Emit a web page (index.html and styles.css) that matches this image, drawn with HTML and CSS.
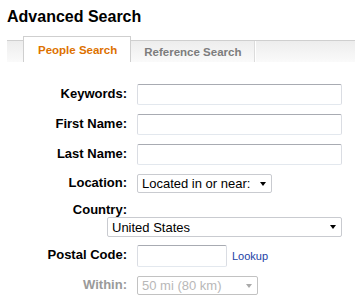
FILE: index.html
```html
<!DOCTYPE html>
<html>
<head>
<meta charset="utf-8">
<link rel="stylesheet" href="styles.css">
</head>
<body>
<div class="page">
  <h1 class="title">Advanced Search</h1>
  <div class="tabs">
    <div class="tab tab-active">People Search</div>
    <div class="tab tab-other">Reference Search</div>
  </div>
  <form class="form">
    <div class="row">
      <label class="label">Keywords:</label>
      <input class="text wide" type="text">
    </div>
    <div class="row">
      <label class="label">First Name:</label>
      <input class="text wide" type="text">
    </div>
    <div class="row">
      <label class="label">Last Name:</label>
      <input class="text wide" type="text">
    </div>
    <div class="row">
      <label class="label">Location:</label>
      <span class="sel sel-loc"><select><option>Located in or near:</option></select></span>
    </div>
    <div class="row row-country-label">
      <label class="label">Country:</label>
    </div>
    <div class="row row-country">
      <span class="sel sel-country"><select><option>United States</option></select></span>
    </div>
    <div class="row">
      <label class="label">Postal Code:</label>
      <input class="text postal" type="text">
      <a class="lookup" href="#">Lookup</a>
    </div>
    <div class="row">
      <label class="label label-dis">Within:</label>
      <span class="sel sel-within sel-dis"><select disabled><option>50 mi (80 km)</option></select></span>
    </div>
  </form>
</div>
</body>
</html>
```

FILE: styles.css
```css
html, body {
  margin: 0;
  padding: 0;
  background: #fff;
}
.page {
  padding-left: 7px;
  font-family: "Liberation Sans", Arial, sans-serif;
  color: #000;
}
.title {
  margin: 7px 0 0 0;
  font-size: 16px;
  line-height: 19px;
  font-weight: bold;
}
.tabs {
  margin-top: 14px;
  height: 21px;
  border-top: 1px solid #cfcfcf;
  background: linear-gradient(#ededed, #fafafa);
  display: flex;
  padding-left: 16px;
}
.tab {
  font-size: 11.5px;
  font-weight: bold;
  display: flex;
  align-items: center;
}
.tab-active {
  margin-top: -5px;
  height: 25px;
  padding: 0 13px 0 14px;
  background: #fff;
  border: 1px solid #cfcfcf;
  border-bottom: none;
  color: #dd7200;
  padding-top: 1px;
  box-sizing: border-box;
  height: 26px;
}
.tab-other {
  color: #7d7d7d;
  padding: 0 13px 0 13px;
  border-right: 1px solid #dcdcdc;
  box-shadow: 1px 0 0 #fff;
}
.form {
  margin-top: 22px;
}
.row {
  display: flex;
  align-items: center;
  margin-bottom: 9px;
}
.label {
  width: 120px;
  margin-right: 10px;
  text-align: right;
  font-size: 13px;
  line-height: 15px;
  font-weight: bold;
  padding-bottom: 3px;
}
.label-dis {
  color: #9a9a9a;
}
.text {
  box-sizing: border-box;
  height: 21px;
  margin: 0;
  border: 1px solid #dadde3;
  border-top-color: #a8abb2;
  border-bottom-color: #e3e8ee;
  border-radius: 2px;
  background: #fff;
  font-family: "Liberation Sans", Arial, sans-serif;
  font-size: 13px;
}
.wide {
  width: 205px;
}
.postal {
  width: 90px;
  height: 22px;
}
.lookup {
  margin-left: 5px;
  font-size: 11px;
  color: #2142a6;
  text-decoration: none;
}
.sel {
  position: relative;
  display: inline-block;
}
.sel select {
  -webkit-appearance: none;
  appearance: none;
  box-sizing: border-box;
  margin: 0;
  padding: 0 0 0 4px;
  border: 1px solid #c9cbd0;
  border-radius: 2px;
  background: #fff;
  font-family: "Liberation Sans", Arial, sans-serif;
  font-size: 13px;
  color: #000;
  display: block;
}
.sel::after {
  content: "";
  position: absolute;
  right: 6px;
  top: 50%;
  margin-top: -2px;
  border-left: 3.5px solid transparent;
  border-right: 3.5px solid transparent;
  border-top: 4px solid #000;
  pointer-events: none;
}
.sel-loc select {
  width: 135px;
  height: 19px;
}
.row-country-label {
  margin-bottom: 0;
}
.row-country-label .label {
  padding-bottom: 0;
}
.row-country {
  padding-left: 100px;
  margin-bottom: 8px;
}
.sel-country select {
  width: 235px;
  height: 20px;
}
.sel-within select {
  width: 121px;
  height: 19px;
  color: #9a9a9a;
  border-color: #a9a9a9;
}
.sel-dis::after {
  border-top-color: #aaaaaa;
}
```
